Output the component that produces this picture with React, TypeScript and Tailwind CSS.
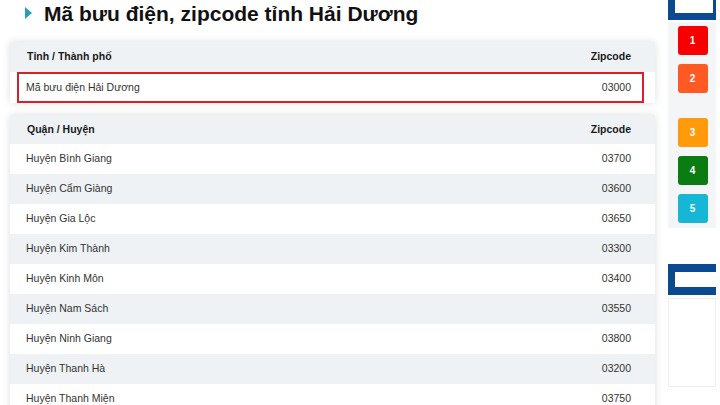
import React from "react";

const rows: [string, string][] = [
  ["Huyện Bình Giang", "03700"],
  ["Huyện Cẩm Giàng", "03600"],
  ["Huyện Gia Lộc", "03650"],
  ["Huyện Kim Thành", "03300"],
  ["Huyện Kinh Môn", "03400"],
  ["Huyện Nam Sách", "03550"],
  ["Huyện Ninh Giang", "03800"],
  ["Huyện Thanh Hà", "03200"],
  ["Huyện Thanh Miện", "03750"],
];

const badges: { n: string; c: string; mt: string }[] = [
  { n: "1", c: "bg-[#f60000]", mt: "mt-[4px]" },
  { n: "2", c: "bg-[#ff5a24]", mt: "mt-[9px]" },
  { n: "3", c: "bg-[#ff9b0a]", mt: "mt-[25px]" },
  { n: "4", c: "bg-[#0b7c12]", mt: "mt-[9px]" },
  { n: "5", c: "bg-[#16b6d6]", mt: "mt-[9px]" },
];

export default function App() {
  return (
    <div
      className="w-[720px] h-[405px] overflow-hidden bg-white flex"
      style={{ fontFamily: '"Liberation Sans", Arial, sans-serif' }}
    >
      <div className="w-[660px] shrink-0 pl-[10px] pr-[5px]">
        <div className="h-[42px] flex items-start pt-[2px]">
          <div className="ml-[15px] mt-[5px] w-0 h-0 border-t-[6px] border-b-[6px] border-l-[7px] border-t-transparent border-b-transparent border-l-[#2a9db3]" />
          <h1 className="ml-[12px] text-[21px] leading-[24px] font-bold text-[#111]">
            Mã bưu điện, zipcode tỉnh Hải Dương
          </h1>
        </div>
        <div className="bg-white shadow-[0_0_8px_rgba(0,0,0,0.13)]">
          <div className="h-[30px] bg-[#eef2f5] flex items-center justify-between pl-[17px] pr-[24px] text-[10.5px] font-bold text-[#1a1a1a]">
            <span>Tỉnh / Thành phố</span>
            <span>Zipcode</span>
          </div>
          <div className="h-[31px] ml-[7px] mr-[11px] border-[2px] border-[#d8202c] flex items-center justify-between pl-[7px] pr-[11px] text-[10.5px] text-[#333]">
            <span>Mã bưu điện Hải Dương</span>
            <span>03000</span>
          </div>
        </div>
        <div className="mt-[12px] bg-white shadow-[0_0_8px_rgba(0,0,0,0.13)]">
          <div className="h-[29px] bg-[#eef2f5] flex items-center justify-between pl-[17px] pr-[24px] text-[10.5px] font-bold text-[#1a1a1a]">
            <span>Quận / Huyện</span>
            <span>Zipcode</span>
          </div>
          {rows.map(([name, code], i) => (
            <div
              key={name}
              className={`h-[30px] flex items-center justify-between pl-[16px] pr-[24px] text-[10.5px] text-[#333] ${
                i % 2 === 1 ? "bg-[#eef2f5]" : "bg-white"
              }`}
            >
              <span>{name}</span>
              <span>{code}</span>
            </div>
          ))}
        </div>
      </div>
      <div className="ml-[8px] w-[48px] shrink-0 flex flex-col">
        <div className="h-[20px] border-l-[7px] border-b-[7px] border-r-[3px] border-[#0b4a90]" />
        <div className="mt-[2px] h-[206px] bg-[#f4f5f7] flex flex-col items-center pl-[1px]">
          {badges.map((b) => (
            <div
              key={b.n}
              className={`${b.mt} ${b.c} w-[30px] h-[29px] rounded-[3px] flex items-center justify-center text-white text-[10px] font-bold`}
            >
              {b.n}
            </div>
          ))}
        </div>
        <div className="mt-[36px] h-[31px] border-l-[7px] border-t-[8px] border-b-[8px] border-[#0b4a90] bg-white" />
        <div className="mt-[3px] h-[89px] bg-white border border-[#eceef1]" />
      </div>
    </div>
  );
}
